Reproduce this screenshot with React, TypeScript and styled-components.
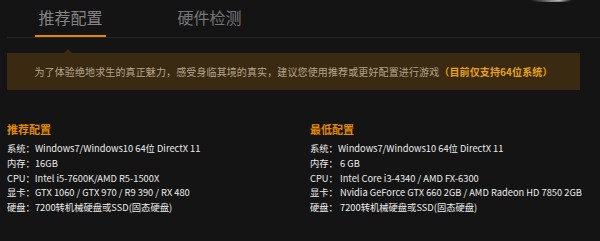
import styled, { createGlobalStyle } from 'styled-components';

const GlobalStyle = createGlobalStyle`
  html, body {
    margin: 0;
    padding: 0;
    background: #141414;
  }
  body {
    font-family: "Noto Sans CJK SC", "Noto Sans", sans-serif;
    color: #e0e0e0;
  }
`;

type Spec = { label: string; value: string };

const recommended: Spec[] = [
  { label: '系统：', value: 'Windows7/Windows10 64位 DirectX 11' },
  { label: '内存：', value: '16GB' },
  { label: 'CPU：', value: 'Intel i5-7600K/AMD R5-1500X' },
  { label: '显卡：', value: 'GTX 1060 / GTX 970 / R9 390 / RX 480' },
  { label: '硬盘：', value: '7200转机械硬盘或SSD(固态硬盘)' },
];

const minimum: Spec[] = [
  { label: '系统：', value: 'Windows7/Windows10 64位 DirectX 11' },
  { label: '内存：', value: ' 6 GB' },
  { label: 'CPU：', value: ' Intel Core i3-4340 / AMD FX-6300' },
  { label: '显卡：', value: ' Nvidia GeForce GTX 660 2GB / AMD Radeon HD 7850 2GB' },
  { label: '硬盘：', value: ' 7200转机械硬盘或SSD(固态硬盘)' },
];

const App = (): JSX.Element => {
  return (
    <Page>
      <GlobalStyle />
      <Glow />
      <TabBar>
        <Tab $active>推荐配置</Tab>
        <Tab>硬件检测</Tab>
      </TabBar>
      <Notice>
        为了体验绝地求生的真正魅力，感受身临其境的真实，建议您使用推荐或更好配置进行游戏
        <strong>（目前仅支持64位系统）</strong>
      </Notice>
      <Columns>
        <Column>
          <ColumnTitle>推荐配置</ColumnTitle>
          {recommended.map((s) => (
            <SpecLine key={s.label}>
              {s.label}
              {s.value}
            </SpecLine>
          ))}
        </Column>
        <Column>
          <ColumnTitle>最低配置</ColumnTitle>
          {minimum.map((s) => (
            <SpecLine key={s.label}>
              {s.label}
              {s.value}
            </SpecLine>
          ))}
        </Column>
      </Columns>
    </Page>
  );
};

const Page = styled.div`
  position: relative;
  width: 600px;
  height: 241px;
  overflow: hidden;
  background: #141414;
`;

const Glow = styled.div`
  position: absolute;
  top: -1px;
  left: 530px;
  width: 42px;
  height: 3px;
  border-radius: 50%;
  background: linear-gradient(90deg, rgba(255, 255, 255, 0), rgba(255, 255, 255, 0.7) 70%, rgba(255, 255, 255, 0));
`;

const TabBar = styled.div`
  display: flex;
  gap: 68px;
  margin-left: 7px;
  padding-left: 28px;
  height: 37px;
  border-bottom: 1px solid #252525;
`;

const Tab = styled.div<{ $active?: boolean }>`
  box-sizing: border-box;
  width: 71px;
  height: 37px;
  line-height: 35px;
  text-align: center;
  font-size: 16px;
  color: ${(p) => (p.$active ? '#858585' : '#767676')};
  border-bottom: 2px solid ${(p) => (p.$active ? '#e08a00' : 'transparent')};
`;

const Notice = styled.div`
  position: relative;
  box-sizing: border-box;
  margin: 15px 0 0 7px;
  width: 573px;
  height: 37px;
  line-height: 37px;
  background: #3a2a12;
  text-align: center;
  font-size: 10px;
  letter-spacing: 0.12px;
  color: #b3a58c;
  white-space: nowrap;

  &::before {
    content: '';
    position: absolute;
    top: -4px;
    left: 57px;
    border-left: 4px solid transparent;
    border-right: 4px solid transparent;
    border-bottom: 4px solid #3a2a12;
  }

  strong {
    color: #e8a212;
    font-weight: bold;
  }
`;

const Columns = styled.div`
  display: grid;
  grid-template-columns: 303px 1fr;
  margin: 31px 0 0 7px;
`;

const Column = styled.div`
  display: flex;
  flex-direction: column;
`;

const ColumnTitle = styled.div`
  font-size: 11px;
  font-weight: bold;
  line-height: 16px;
  color: #e08a00;
  margin-bottom: 4px;
`;

const SpecLine = styled.div`
  font-size: 9.3px;
  line-height: 14.75px;
  color: #ececec;
  white-space: pre;
`;

export default App;
